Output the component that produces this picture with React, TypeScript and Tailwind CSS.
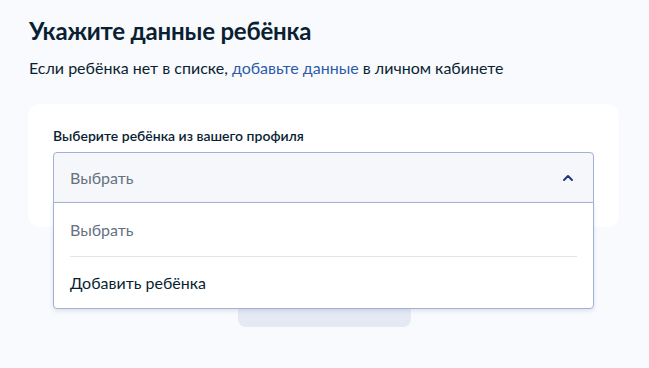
import { ChevronUp } from 'lucide-react'

const options = [
  { label: 'Выбрать', muted: true },
  { label: 'Добавить ребёнка', muted: false },
]

export default function App() {
  return (
    <div className="min-h-screen w-full bg-[#f8fafd] font-['Lato','Liberation_Sans',sans-serif] text-[#0b1f33]">
      <div className="px-[28px] pt-[14px]">
        <h1 className="pl-[1px] text-[24px] font-bold leading-[34px] tracking-[-0.2px]">Укажите данные ребёнка</h1>
        <p className="mt-[10px] pl-[1px] text-[16px] leading-[20px]">
          Если ребёнка нет в списке, <span className="text-[#2f5aa8]">добавьте данные</span> в личном кабинете
        </p>

        <div className="mt-[26px] w-[591px] rounded-[12px] bg-white px-[25px] pt-[23px] pb-[24px]">
          <label className="block text-[14px] font-semibold leading-[18px]">Выберите ребёнка из вашего профиля</label>

          <div className="relative mt-[7px]">
            <div className="flex h-[51px] items-center justify-between rounded-t-[4px] border border-[#a3b0d6] bg-[#f5f7fa] pl-[16px] pr-[17px]">
              <span className="text-[16px] text-[#66727f]">Выбрать</span>
              <ChevronUp className="h-[16px] w-[16px] text-[#1d3a7a]" strokeWidth={3} />
            </div>

            <div className="absolute left-0 right-0 top-[50px] z-10 rounded-b-[4px] border border-[#a3b0d6] bg-white px-[16px] shadow-[0_2px_4px_rgba(30,50,100,0.12)]">
              {options.map((o, i) => (
                <div
                  key={o.label}
                  className={`flex items-center text-[16px] ${i > 0 ? 'h-[52px] border-t border-[#e1e5eb]' : 'h-[53px]'} ${o.muted ? 'text-[#66727f]' : 'text-[#0b1f33]'}`}
                >
                  {o.label}
                </div>
              ))}
            </div>
          </div>
        </div>

        <div className="mt-[52px] flex justify-center">
          <div className="h-[48px] w-[173px] rounded-[8px] bg-[#e4e9f4]" />
        </div>
      </div>
    </div>
  )
}
